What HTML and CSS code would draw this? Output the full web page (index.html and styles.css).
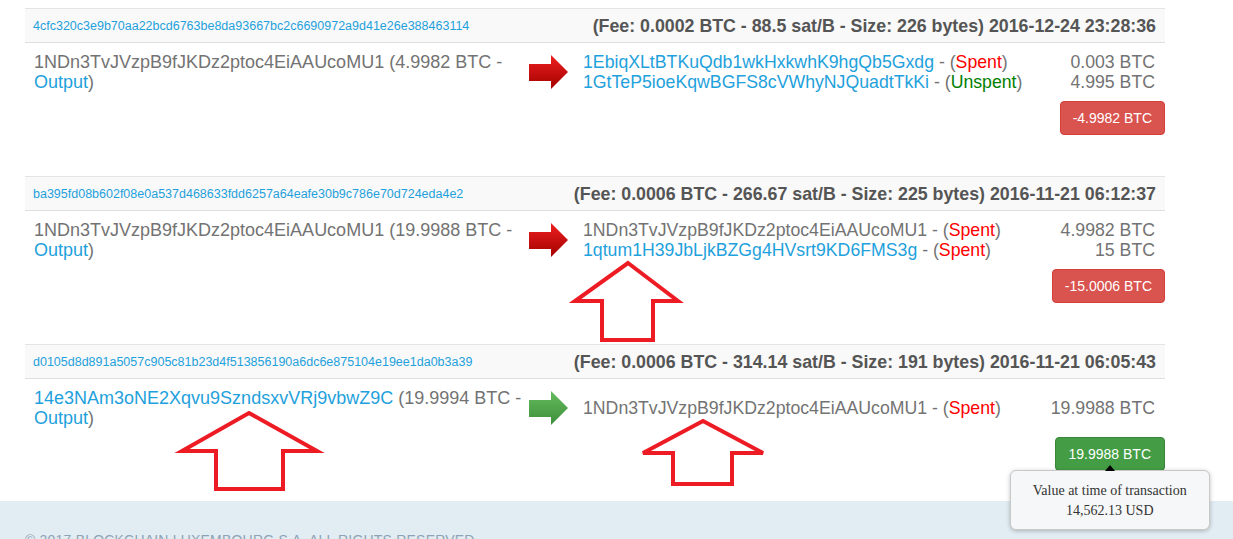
FILE: index.html
```html
<!DOCTYPE html>
<html lang="en">
<head>
  <meta charset="UTF-8" />
  <title>Address transactions</title>
  <link rel="stylesheet" href="styles.css">
</head>
<body>

  <div class="txs">

    <!-- tx 1 -->
    <div class="tx">
      <div class="tx-head">
        <a class="hash" href="#">4cfc320c3e9b70aa22bcd6763be8da93667bc2c6690972a9d41e26e388463114</a>
        <span class="meta">(Fee: 0.0002 BTC - 88.5 sat/B - Size: 226 bytes) 2016-12-24 23:28:36</span>
      </div>
      <div class="tx-body">
        <div class="from">1NDn3TvJVzpB9fJKDz2ptoc4EiAAUcoMU1 (4.9982 BTC - <a href="#">Output</a>)</div>
        <svg class="arrow" width="40" height="35" viewBox="0 0 40 35">
          <defs>
            <linearGradient id="redGrad" x1="0" y1="0" x2="0" y2="1">
              <stop offset="0" stop-color="#ee2020" />
              <stop offset="1" stop-color="#a30000" />
            </linearGradient>
          </defs>
          <path d="M0 9 H22 V0 L39 17 L22 34 V26 H0 Z" fill="url(#redGrad)" />
        </svg>
        <div class="to">
          <div class="out">
            <span><a href="#">1EbiqXLtBTKuQdb1wkHxkwhK9hgQb5Gxdg</a> - (<span class="spent">Spent</span>)</span>
            <span class="amt">0.003 BTC</span>
          </div>
          <div class="out">
            <span><a href="#">1GtTeP5ioeKqwBGFS8cVWhyNJQuadtTkKi</a> - (<span class="unspent">Unspent</span>)</span>
            <span class="amt">4.995 BTC</span>
          </div>
        </div>
      </div>
      <div class="tx-foot">
        <span class="btn btn-danger">-4.9982 BTC</span>
      </div>
    </div>

    <!-- tx 2 -->
    <div class="tx">
      <div class="tx-head">
        <a class="hash" href="#">ba395fd08b602f08e0a537d468633fdd6257a64eafe30b9c786e70d724eda4e2</a>
        <span class="meta">(Fee: 0.0006 BTC - 266.67 sat/B - Size: 225 bytes) 2016-11-21 06:12:37</span>
      </div>
      <div class="tx-body">
        <div class="from">1NDn3TvJVzpB9fJKDz2ptoc4EiAAUcoMU1 (19.9988 BTC - <a href="#">Output</a>)</div>
        <svg class="arrow" width="40" height="35" viewBox="0 0 40 35">
          <path d="M0 9 H22 V0 L39 17 L22 34 V26 H0 Z" fill="url(#redGrad)" />
        </svg>
        <div class="to">
          <div class="out">
            <span>1NDn3TvJVzpB9fJKDz2ptoc4EiAAUcoMU1 - (<span class="spent">Spent</span>)</span>
            <span class="amt">4.9982 BTC</span>
          </div>
          <div class="out">
            <span><a href="#">1qtum1H39JbLjkBZGg4HVsrt9KD6FMS3g</a> - (<span class="spent">Spent</span>)</span>
            <span class="amt">15 BTC</span>
          </div>
        </div>
      </div>
      <div class="tx-foot">
        <span class="btn btn-danger">-15.0006 BTC</span>
      </div>
    </div>

    <!-- tx 3 -->
    <div class="tx last">
      <div class="tx-head">
        <a class="hash" href="#">d0105d8d891a5057c905c81b23d4f513856190a6dc6e875104e19ee1da0b3a39</a>
        <span class="meta">(Fee: 0.0006 BTC - 314.14 sat/B - Size: 191 bytes) 2016-11-21 06:05:43</span>
      </div>
      <div class="tx-body">
        <div class="from"><a href="#">14e3NAm3oNE2Xqvu9SzndsxvVRj9vbwZ9C</a> (19.9994 BTC - <a href="#">Output</a>)</div>
        <svg class="arrow" width="40" height="35" viewBox="0 0 40 35">
          <defs>
            <linearGradient id="greenGrad" x1="0" y1="0" x2="0" y2="1">
              <stop offset="0" stop-color="#66bb5e" />
              <stop offset="1" stop-color="#3c8f3a" />
            </linearGradient>
          </defs>
          <path d="M0 9 H22 V0 L39 17 L22 34 V26 H0 Z" fill="url(#greenGrad)" />
        </svg>
        <div class="to">
          <div class="out">
            <span>1NDn3TvJVzpB9fJKDz2ptoc4EiAAUcoMU1 - (<span class="spent">Spent</span>)</span>
            <span class="amt">19.9988 BTC</span>
          </div>
        </div>
      </div>
      <div class="tx-foot">
        <span class="btn-wrap">
          <span class="btn btn-success">19.9988 BTC</span>
          <span class="tip">
            Value at time of transaction<br>
            14,562.13 USD
          </span>
        </span>
      </div>
    </div>

  </div>

  <footer class="footer">
    <p>© 2017 Blockchain Luxembourg S.A. All rights reserved.</p>
  </footer>

  <!-- hand drawn annotation arrows -->
  <svg class="marks" width="1233" height="539" viewBox="0 0 1233 539">
    <polygon points="628,263 678,301 653,301 653,340 602,340 602,301 575,301" />
    <polygon points="249,413 317,451 283,451 283,489 216,489 216,451 182,451" />
    <polygon points="703,421 763,453 732,453 732,484 673,484 673,453 643,453" />
  </svg>

</body>
</html>
```

FILE: styles.css
```css
html, body {
  margin: 0;
  padding: 0;
  background: #fff;
  font-family: "Liberation Sans", Arial, sans-serif;
  color: #737373;
  overflow: hidden;
}

a {
  color: #1ea1dc;
  text-decoration: none;
}

.txs {
  width: 1140px;
  margin-left: 25px;
  padding-top: 8px;
}

.tx {
  margin-bottom: 41px;
}

.tx.last {
  margin-bottom: 30px;
}

/* ligne grise du haut */
.tx-head {
  display: flex;
  justify-content: space-between;
  align-items: center;
  height: 18px;
  padding: 8px 9px 7px 8px;
  background: #f9f9f9;
  border-top: 1px solid #e4e4e4;
  border-bottom: 1px solid #dedede;
}

.hash {
  font-size: 12.5px;
}

.meta {
  font-size: 17.8px;
  font-weight: bold;
  color: #555;
}

.tx-body {
  display: flex;
  align-items: center;
  padding: 9px 10px 0 9px;
  font-size: 18px;
  line-height: 20px;
}

.from {
  width: 492px;
  flex: none;
}

.arrow {
  flex: none;
  margin-left: 3px;
  display: block;
}

.to {
  flex: 1;
  margin-left: 14px;
  font-size: 17.7px;
}

.out {
  display: flex;
  justify-content: space-between;
}

.spent {
  color: #f00;
}

.unspent {
  color: #008000;
}

.tx-foot {
  display: flex;
  justify-content: flex-end;
  margin-top: 9px;
}

.btn {
  display: inline-block;
  font-size: 14px;
  line-height: 20px;
  padding: 6px 12px;
  border-radius: 4px;
  color: #fff;
  border: 1px solid transparent;
}

.btn-danger {
  background: #d9534f;
  border-color: #d43f3a;
}

.btn-success {
  background: #449d44;
  border-color: #398439;
  padding: 6px 13px;
}

.btn-wrap {
  position: relative;
  display: inline-block;
}

/* tooltip au survol du montant */
.tip {
  position: absolute;
  top: 33px;
  left: 50%;
  transform: translateX(-50%);
  width: 198px;
  padding: 10px 0 8px;
  background: #f6f7f8;
  border: 1px solid #c9c9c9;
  border-radius: 6px;
  box-shadow: 0 1px 4px rgba(0, 0, 0, 0.25);
  font-family: "Liberation Serif", "Times New Roman", serif;
  font-size: 14px;
  line-height: 20px;
  color: #333;
  text-align: center;
  z-index: 5;
}

.tip::before {
  content: "";
  position: absolute;
  top: -6px;
  left: 50%;
  margin-left: -5px;
  border-left: 5px solid transparent;
  border-right: 5px solid transparent;
  border-bottom: 6px solid #000;
}

.footer {
  background: #e2edf3;
  height: 60px;
  padding: 0 25px;
}

.footer p {
  margin: 0;
  padding-top: 31px;
  font-size: 14px;
  text-transform: uppercase;
  letter-spacing: 0.2px;
  color: #8ea3b3;
}

.marks {
  position: absolute;
  top: 0;
  left: 0;
  pointer-events: none;
}

.marks polygon {
  fill: none;
  stroke: #ed1c24;
  stroke-width: 4;
  stroke-linejoin: miter;
}
```
